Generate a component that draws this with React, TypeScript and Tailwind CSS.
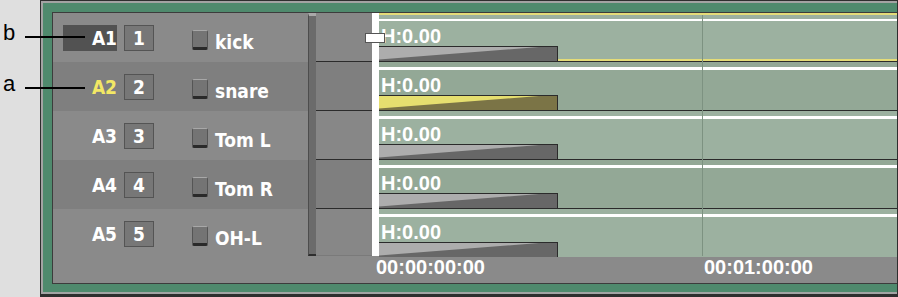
import React from 'react'

type Track = { id: string; num: string; name: string }

const tracks: Track[] = [
  { id: 'A1', num: '1', name: 'kick' },
  { id: 'A2', num: '2', name: 'snare' },
  { id: 'A3', num: '3', name: 'Tom L' },
  { id: 'A4', num: '4', name: 'Tom R' },
  { id: 'A5', num: '5', name: 'OH-L' },
]

const Ramp = ({ light, dark }: { light: string; dark: string }) => (
  <svg width="179" height="15" className="block shrink-0">
    <rect x="0" y="0" width="179" height="15" fill={dark} />
    <polygon points="0,1 160,1 0,13.5" fill={light} />
    <rect x="0" y="0" width="179" height="1" fill="#2b2b2b" />
    <rect x="178" y="0" width="1" height="15" fill="#2b2b2b" />
  </svg>
)

const App = () => {
  return (
    <div className="relative flex h-[297px] w-[898px] overflow-hidden bg-[#dfdfdf] font-['Liberation_Sans',Arial,sans-serif]">
      <div className="w-[40px] shrink-0" />

      {/* outer frame */}
      <div className="flex flex-1 border-t border-r border-l border-b-[3px] border-[#2e2e2e] bg-[#a3a3a3] pt-[2px] pb-[2px] pl-[2px]">
        <div className="flex flex-1 bg-[#4f8a6d] pt-[9px] pb-[8px] pl-[9px]">
          <div className="flex flex-1 border-t border-b border-l border-[#3c3c3c] bg-[#8a8a8a]">

            {/* track labels */}
            <div className="flex w-[255px] shrink-0 flex-col font-['DejaVu_Sans_Condensed','DejaVu_Sans',sans-serif] [font-stretch:condensed]">
              {tracks.map((t, i) => (
                <div
                  key={t.id}
                  className={`flex items-start pt-[12px] pl-[10px] ${i === 4 ? 'flex-1' : 'h-[49px]'} ${i % 2 ? 'bg-[#7f7f7f]' : 'bg-[#8a8a8a]'}`}
                >
                  <div
                    className={`flex h-[26px] w-[54px] items-center justify-end text-[19px] font-bold leading-[26px] ${i === 0 ? 'bg-[#525252]' : ''} ${i === 1 ? 'text-[#f3e865]' : 'text-white'}`}
                  >
                    {t.id}
                  </div>
                  <div className="ml-[7px] flex h-[26px] w-[30px] items-center justify-center border border-[#545454] bg-[#777777] text-[19px] font-bold text-white">
                    {t.num}
                  </div>
                  <div className="mt-[5px] ml-[38px] h-[20px] w-[16px] rounded-[2px] border border-[#555555] border-t-[#a8a8a8] border-b-[3px] border-b-[#2a2a2a] bg-[#747474]" />
                  <div className="mt-[4px] ml-[7px] text-[19px] font-bold leading-[26px] text-white">{t.name}</div>
                </div>
              ))}
            </div>

            {/* timeline side */}
            <div className="flex flex-1 flex-col">
              <div className="flex h-[243px]">
                <div className="w-[8px] shrink-0 border-t-[3px] border-l border-b-2 border-[#4d4d4d] border-t-[#a9a9a9] border-b-[#2e2e2e] bg-[#6b6b6b]" />

                <div className="flex w-[56px] shrink-0 flex-col">
                  {tracks.map((t, i) => (
                    <div
                      key={t.id}
                      className={`${i === 4 ? 'flex-1 border-b border-[#7a7a7a]' : 'h-[49px] border-b border-[#2b2b2b]'} ${i % 2 ? 'bg-[#7f7f7f]' : 'bg-[#878787]'}`}
                    />
                  ))}
                </div>

                {/* playhead */}
                <div className="relative z-10 w-[7px] shrink-0 bg-white">
                  <div className="absolute top-[20px] left-[-7px] h-[10px] w-[20px] border border-[#555555] bg-white" />
                </div>

                {/* clips */}
                <div className="relative flex flex-1 flex-col">
                  {tracks.map((t, i) => (
                    <div
                      key={t.id}
                      className={`flex flex-col ${i === 4 ? 'flex-1' : 'h-[49px] border-b border-[#2b2b2b]'} ${i % 2 ? 'bg-[#93a896]' : 'bg-[#9cb1a0]'}`}
                    >
                      {i === 0 ? <div className="h-[2px] bg-[#e4dc78]" /> : null}
                      <div className={`${i === 0 ? 'mt-[4px]' : 'mt-[5px]'} h-[3px] bg-white`} />
                      <div className="mt-[5px] pl-[2px] text-[20px] font-bold leading-[20px] text-white">H:0.00</div>
                      <div className="mt-auto flex items-end">
                        {i === 1 ? <Ramp light="#e6df6f" dark="#7b7446" /> : <Ramp light="#adadad" dark="#676767" />}
                        {i === 0 ? <div className="h-[2px] flex-1 bg-[#e4dc78]" /> : null}
                      </div>
                    </div>
                  ))}
                  <div className="absolute top-[2px] bottom-0 left-[323px] w-px bg-[#7d9281]" />
                </div>
              </div>

              {/* ruler */}
              <div className="flex flex-1 items-start bg-[#8a8a8a] pt-[1px] pl-[68px] text-[20px] font-bold leading-[20px] text-white">
                <span>00:00:00:00</span>
                <span className="ml-[219px]">00:01:00:00</span>
              </div>
            </div>
          </div>
        </div>
      </div>

      {/* callouts */}
      <div className="absolute top-[20px] left-[3px] text-[22px] leading-[26px] text-black">b</div>
      <div className="absolute top-[36px] left-[25px] h-[2px] w-[60px] bg-black" />
      <div className="absolute top-[71px] left-[3px] text-[22px] leading-[26px] text-black">a</div>
      <div className="absolute top-[87px] left-[25px] h-[2px] w-[60px] bg-black" />
    </div>
  )
}

export default App
